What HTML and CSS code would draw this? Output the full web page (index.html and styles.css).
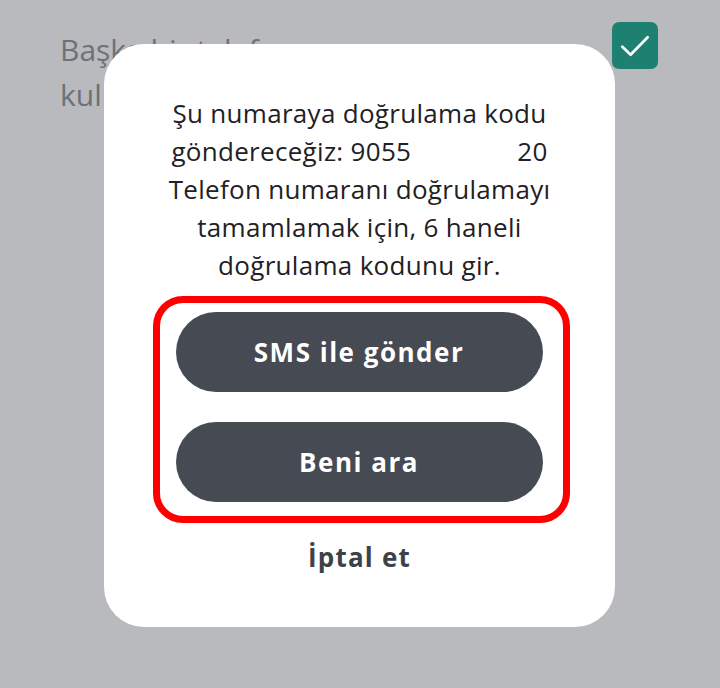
FILE: index.html
```html
<!DOCTYPE html>
<html lang="tr">
<head>
  <meta charset="UTF-8" />
  <meta name="viewport" content="width=device-width, initial-scale=1.0"/>
  <title>Doğrulama</title>
  <link rel="stylesheet" href="styles.css">
</head>
<body>
  <div class="screen">
    <div class="setting-row">
      <p class="setting-label">Başka bir telefon numarası<br>kullan</p>
      <span class="checkbox">
        <svg viewBox="0 0 24 24" width="38" height="38">
          <path d="M4 12.5l5.2 5L20 6.5" fill="none" stroke="#fff" stroke-width="1.7" stroke-linecap="round" stroke-linejoin="round"/>
        </svg>
      </span>
    </div>

    <div class="dialog">
      <p class="dialog-text">
        Şu numaraya doğrulama kodu<br>
        göndereceğiz: 9055<span class="masked"></span>20<br>
        Telefon numaranı doğrulamayı<br>
        tamamlamak için, 6 haneli<br>
        doğrulama kodunu gir.
      </p>
      <div class="highlight">
        <button class="pill">SMS ile gönder</button>
        <button class="pill">Beni ara</button>
      </div>
      <button class="cancel">İptal et</button>
    </div>
  </div>
</body>
</html>
```

FILE: styles.css
```css
:root {
  --backdrop: #b8babe;
  --muted: #6d7179;
  --dark: #464a53;
  --teal: #1e8071;
}

* {
  box-sizing: border-box;
}

body {
  margin: 0;
  background: var(--backdrop);
  font-family: "Open Sans", "Noto Sans", sans-serif;
}

.screen {
  position: relative;
  width: 720px;
  height: 688px;
  overflow: hidden;
}

.setting-row {
  display: flex;
  justify-content: space-between;
  align-items: flex-start;
  padding: 22px 62px 0 60px;
}

.setting-label {
  margin: 5px 0 0;
  font-size: 30px;
  line-height: 45px;
  color: var(--muted);
}

.checkbox {
  display: flex;
  align-items: center;
  justify-content: center;
  width: 46px;
  height: 47px;
  border-radius: 7px;
  background: var(--teal);
}

.dialog {
  position: absolute;
  left: 104px;
  top: 44px;
  width: 511px;
  height: 583px;
  background: #fff;
  border-radius: 40px;
  display: flex;
  flex-direction: column;
  align-items: center;
  padding-top: 50px;
}

.dialog-text {
  margin: 0;
  text-align: center;
  font-size: 26px;
  line-height: 38px;
  letter-spacing: 0.3px;
  color: #1f2125;
}

.masked {
  display: inline-block;
  width: 106px;
}

.highlight {
  margin-top: 12px;
  width: 417px;
  margin-left: 3px;
  border: 7px solid #ff0000;
  border-radius: 30px;
  padding: 9px 20px 14px 16px;
  display: flex;
  flex-direction: column;
  gap: 30px;
}

.pill {
  height: 80px;
  border: none;
  border-radius: 40px;
  background: var(--dark);
  color: #fff;
  font-family: inherit;
  font-size: 26px;
  font-weight: 700;
  letter-spacing: 1.5px;
}

.cancel {
  margin-top: 15px;
  border: none;
  background: none;
  font-family: inherit;
  font-size: 26px;
  font-weight: 700;
  letter-spacing: 1.2px;
  color: #3d4148;
}
```
